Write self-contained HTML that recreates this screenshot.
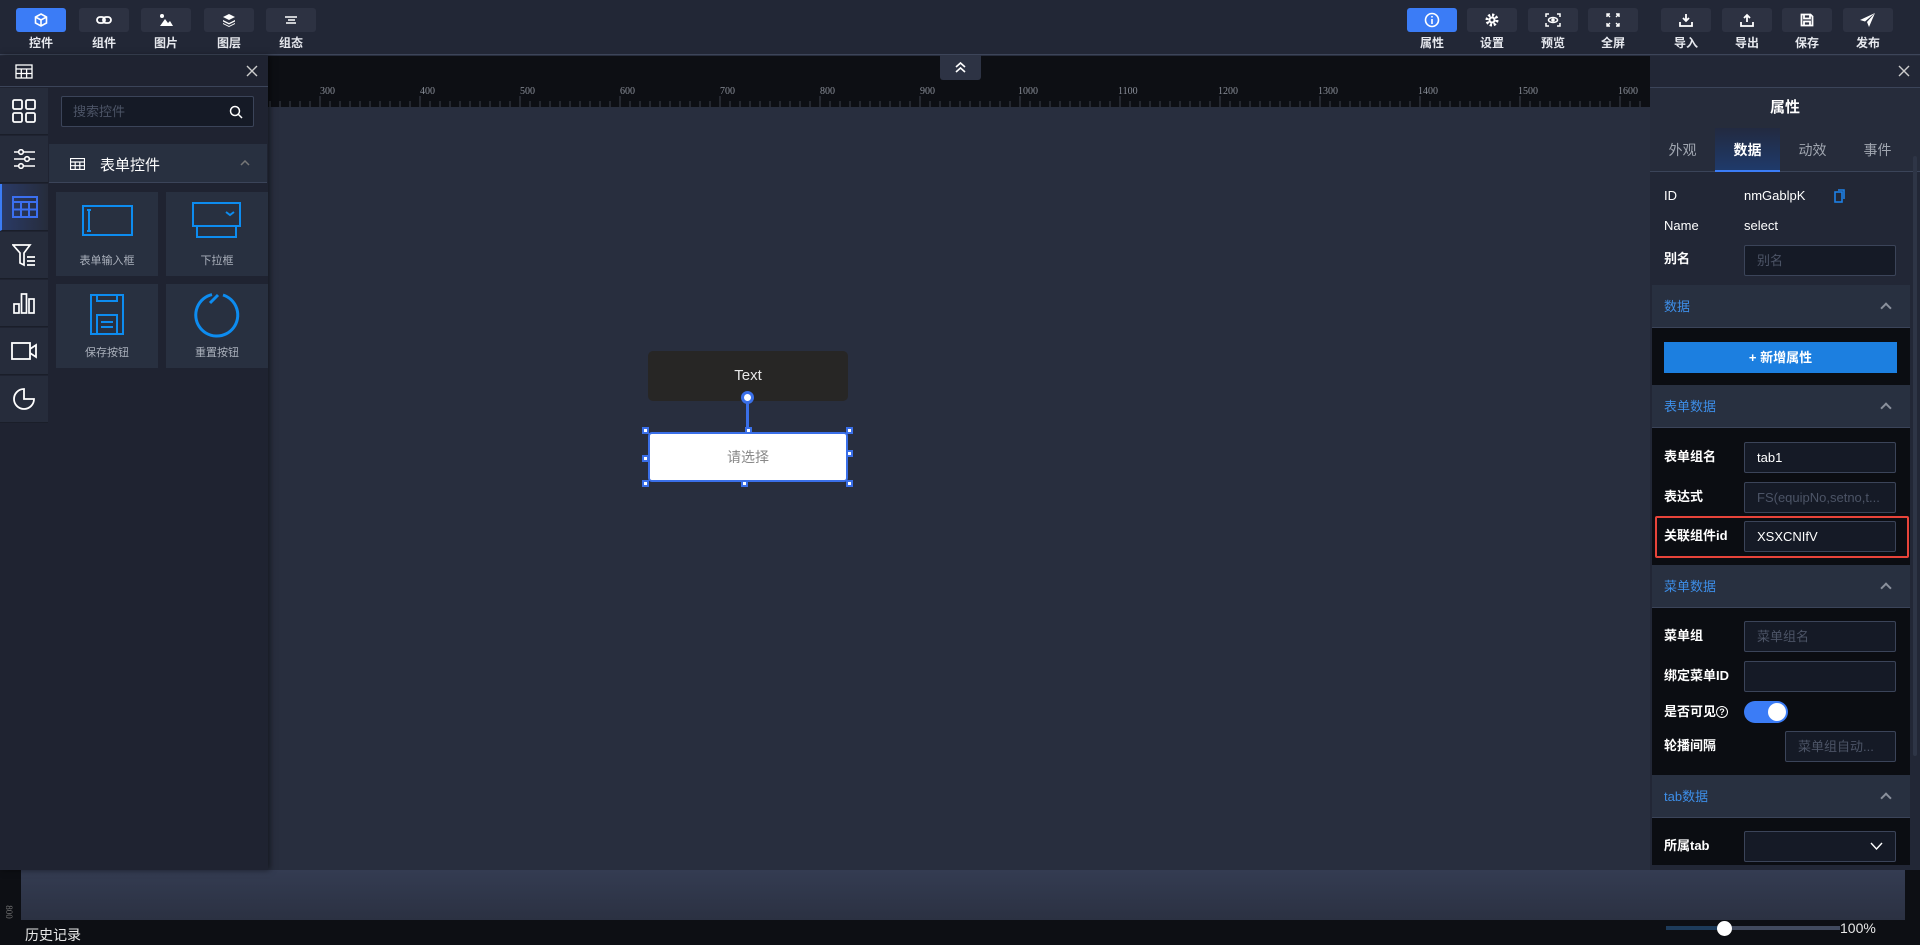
<!DOCTYPE html>
<html><head><meta charset="utf-8"><style>
*{box-sizing:border-box;margin:0;padding:0}
body{width:1920px;height:945px;overflow:hidden;background:#282e3e;font-family:"Liberation Sans","Noto Sans CJK SC",sans-serif;color:#fff;position:relative}
.abs{position:absolute}
#top{left:0;top:0;width:1920px;height:55px;background:#222736;border-bottom:1px solid #3d4559}
.tb{position:absolute;top:8px;width:50px;height:24px;background:#2d3242;border-radius:3px;display:flex;align-items:center;justify-content:center}
.tb.on{background:#3b7cf6}
.tl{position:absolute;top:34px;width:50px;text-align:center;font-size:12px;font-weight:bold;color:#e6e8ee}
#ruler{left:268px;top:56px;width:1382px;height:51px;background:#0d0f14}
.rn{position:absolute;top:30px;font-family:"Liberation Serif",serif;font-size:10px;color:#8a8f99}
#lp{left:0;top:56px;width:268px;height:814px;background:#1f2331;box-shadow:2px 0 6px rgba(0,0,0,.5)}
.ib{position:absolute;left:0;width:48px;height:47px;background:#262c3b;border-bottom:1px solid #1a1e29;display:flex;align-items:center;justify-content:center}
.card{position:absolute;width:102px;height:84px;background:#283040;text-align:center;font-size:11px;color:#aab0bb}
.card span{position:absolute;left:0;right:0;top:60px}
#rp{left:1650px;top:56px;width:270px;height:814px;background:#222736}
.lab{position:absolute;left:14px;font-size:13px;color:#fff}
.inp{position:absolute;left:94px;width:152px;height:31px;border:1px solid #3b4459;background:#151a26;border-radius:2px;font-size:13px;padding-left:12px;line-height:29px;color:#fff;white-space:nowrap;overflow:hidden}
.ph{color:#4c5466}
.sh{position:absolute;left:2px;width:258px;height:43px;background:#283040;border-bottom:1px solid #3b4459;color:#3d8ee8;font-size:13px;line-height:43px;padding-left:12px}
.sh:after{content:"";position:absolute;right:20px;top:19px;width:6px;height:6px;border-left:2px solid #8a909c;border-top:2px solid #8a909c;transform:rotate(45deg)}
.blk{position:absolute;left:2px;width:258px;background:#0b0d12}
.h{position:absolute;width:7px;height:7px;background:#fff;border:2px solid #3a6fe8}
</style></head><body>

<div id="top" class="abs">
 <div class="tb on" style="left:16px"><svg width="14" height="14" viewBox="0 0 14 14" fill="none" stroke="#fff" stroke-width="1.6"><path d="M7 1L12.5 4v6L7 13 1.5 10V4z M1.5 4L7 7l5.5-3 M7 7v6"/></svg></div><div class="tl" style="left:16px">控件</div>
 <div class="tb" style="left:79px"><svg width="16" height="10" viewBox="0 0 16 10" fill="none" stroke="#fff" stroke-width="1.8"><rect x="1" y="2" width="8" height="6" rx="3"/><rect x="7" y="2" width="8" height="6" rx="3"/></svg></div><div class="tl" style="left:79px">组件</div>
 <div class="tb" style="left:141px"><svg width="14" height="14" viewBox="0 0 14 14" fill="#fff"><circle cx="3" cy="3" r="2"/><path d="M1 13l5-7 3 4 2-2 3 5z"/></svg></div><div class="tl" style="left:141px">图片</div>
 <div class="tb" style="left:204px"><svg width="14" height="14" viewBox="0 0 14 14" fill="#fff"><path d="M7 1l6 3-6 3-6-3z"/><path d="M1 7l6 3 6-3v1.5l-6 3-6-3z"/><path d="M1 10l6 3 6-3v1l-6 3-6-3z"/></svg></div><div class="tl" style="left:204px">图层</div>
 <div class="tb" style="left:266px"><svg width="14" height="10" viewBox="0 0 14 10" stroke="#fff" stroke-width="1.6"><path d="M1 2h12M4 5h7M2 8h10"/></svg></div><div class="tl" style="left:266px">组态</div>

 <div class="tb on" style="left:1407px"><svg width="16" height="16" viewBox="0 0 16 16" fill="none" stroke="#fff" stroke-width="1.6"><circle cx="8" cy="8" r="6.5"/><path d="M8 7v5M8 4v1.5"/></svg></div><div class="tl" style="left:1407px">属性</div>
 <div class="tb" style="left:1467px"><svg width="14" height="14" viewBox="0 0 14 14"><circle cx="7" cy="7" r="5" fill="none" stroke="#fff" stroke-width="3" stroke-dasharray="2.2 1.7"/><circle cx="7" cy="7" r="3.5" fill="#fff"/><circle cx="7" cy="7" r="1.5" fill="#2d3242"/></svg></div><div class="tl" style="left:1467px">设置</div>
 <div class="tb" style="left:1528px"><svg width="16" height="14" viewBox="0 0 16 14" fill="none" stroke="#fff" stroke-width="1.5"><path d="M1 4V1h3M12 1h3v3M15 10v3h-3M4 13H1v-3"/><ellipse cx="8" cy="7" rx="4.5" ry="2.5"/><circle cx="8" cy="7" r="1" fill="#fff"/></svg></div><div class="tl" style="left:1528px">预览</div>
 <div class="tb" style="left:1588px"><svg width="14" height="14" viewBox="0 0 14 14" fill="none" stroke="#fff" stroke-width="1.4"><path d="M1 4V1h3M1 1l3 3M13 4V1h-3M13 1l-3 3M1 10v3h3M1 13l3-3M13 10v3h-3M13 13l-3-3"/></svg></div><div class="tl" style="left:1588px">全屏</div>
 <div class="tb" style="left:1661px"><svg width="14" height="14" viewBox="0 0 14 14" fill="none" stroke="#fff" stroke-width="1.8"><path d="M7 1v7M4 5l3 3 3-3M1 9v4h12V9"/></svg></div><div class="tl" style="left:1661px">导入</div>
 <div class="tb" style="left:1722px"><svg width="14" height="14" viewBox="0 0 14 14" fill="none" stroke="#fff" stroke-width="1.8"><path d="M7 9V2M4 5l3-3 3 3M1 9v4h12V9"/></svg></div><div class="tl" style="left:1722px">导出</div>
 <div class="tb" style="left:1782px"><svg width="14" height="14" viewBox="0 0 14 14" fill="none" stroke="#fff" stroke-width="1.8"><path d="M1.5 1.5h9l2 2v9h-11z M4 1.5v4h6v-4 M4 12.5v-4h6v4"/></svg></div><div class="tl" style="left:1782px">保存</div>
 <div class="tb" style="left:1843px"><svg width="16" height="14" viewBox="0 0 16 14" fill="#fff"><path d="M15 0L0 7l5 1.5zM15 0L7 9l2 5z"/></svg></div><div class="tl" style="left:1843px">发布</div>
</div>

<div id="ruler" class="abs">
 <svg class="abs" style="left:0;top:40px" width="1382" height="11">
 <path stroke="#3a3f4a" d="M2 5v6M12 5v6M22 5v6M32 5v6M42 5v6M52 0v11M62 5v6M72 5v6M82 5v6M92 5v6M102 5v6M112 5v6M122 5v6M132 5v6M142 5v6M152 0v11M162 5v6M172 5v6M182 5v6M192 5v6M202 5v6M212 5v6M222 5v6M232 5v6M242 5v6M252 0v11M262 5v6M272 5v6M282 5v6M292 5v6M302 5v6M312 5v6M322 5v6M332 5v6M342 5v6M352 0v11M362 5v6M372 5v6M382 5v6M392 5v6M402 5v6M412 5v6M422 5v6M432 5v6M442 5v6M452 0v11M462 5v6M472 5v6M482 5v6M492 5v6M502 5v6M512 5v6M522 5v6M532 5v6M542 5v6M552 0v11M562 5v6M572 5v6M582 5v6M592 5v6M602 5v6M612 5v6M622 5v6M632 5v6M642 5v6M652 0v11M662 5v6M672 5v6M682 5v6M692 5v6M702 5v6M712 5v6M722 5v6M732 5v6M742 5v6M752 0v11M762 5v6M772 5v6M782 5v6M792 5v6M802 5v6M812 5v6M822 5v6M832 5v6M842 5v6M852 0v11M862 5v6M872 5v6M882 5v6M892 5v6M902 5v6M912 5v6M922 5v6M932 5v6M942 5v6M952 0v11M962 5v6M972 5v6M982 5v6M992 5v6M1002 5v6M1012 5v6M1022 5v6M1032 5v6M1042 5v6M1052 0v11M1062 5v6M1072 5v6M1082 5v6M1092 5v6M1102 5v6M1112 5v6M1122 5v6M1132 5v6M1142 5v6M1152 0v11M1162 5v6M1172 5v6M1182 5v6M1192 5v6M1202 5v6M1212 5v6M1222 5v6M1232 5v6M1242 5v6M1252 0v11M1262 5v6M1272 5v6M1282 5v6M1292 5v6M1302 5v6M1312 5v6M1322 5v6M1332 5v6M1342 5v6M1352 0v11M1362 5v6M1372 5v6"/></svg>
 <div class="rn" style="left:52px">300</div><div class="rn" style="left:152px">400</div><div class="rn" style="left:252px">500</div><div class="rn" style="left:352px">600</div><div class="rn" style="left:452px">700</div><div class="rn" style="left:552px">800</div><div class="rn" style="left:652px">900</div><div class="rn" style="left:750px">1000</div><div class="rn" style="left:850px">1100</div><div class="rn" style="left:950px">1200</div><div class="rn" style="left:1050px">1300</div><div class="rn" style="left:1150px">1400</div><div class="rn" style="left:1250px">1500</div><div class="rn" style="left:1350px">1600</div>
</div>
<div class="abs" style="left:940px;top:55px;width:41px;height:25px;background:#2d3344;border-radius:0 0 3px 3px"><svg class="abs" style="left:14px;top:6px" width="13" height="12" fill="none" stroke="#fff" stroke-width="1.6"><path d="M2 6l4.5-4 4.5 4M2 11l4.5-4 4.5 4"/></svg></div>

<div class="abs" style="left:648px;top:351px;width:200px;height:50px;background:#272625;border-radius:5px;text-align:center;line-height:50px;font-size:15px;color:#e8e8e8">Text</div>
<div class="abs" style="left:746px;top:398px;width:3px;height:34px;background:#3a6fe8"></div>
<div class="abs" style="left:741px;top:391px;width:13px;height:13px;border-radius:50%;background:#fff;border:3px solid #3a6fe8"></div>
<div class="abs" style="left:648px;top:432px;width:200px;height:50px;background:#fff;border:2px solid #3a6fe8;border-radius:4px;text-align:center;line-height:46px;font-size:14px;color:#888">请选择</div>
<div class="h" style="left:642px;top:427px"></div><div class="h" style="left:745px;top:427px"></div><div class="h" style="left:846px;top:427px"></div>
<div class="h" style="left:642px;top:455px"></div><div class="h" style="left:846px;top:450px"></div>
<div class="h" style="left:642px;top:480px"></div><div class="h" style="left:741px;top:480px"></div><div class="h" style="left:846px;top:480px"></div>

<div class="abs" style="left:21px;top:870px;width:1884px;height:50px;background:linear-gradient(#343c52,#2b3142)"></div>
<div class="abs" style="left:0;top:920px;width:1920px;height:25px;background:#0d0f14"></div>
<div class="abs" style="left:0;top:870px;width:21px;height:50px;background:#0d0f14"></div>
<div class="abs" style="left:1905px;top:870px;width:15px;height:50px;background:#0d0f14"></div>
<div class="abs" style="left:2px;top:907px;font-size:9px;color:#777;transform:rotate(90deg);font-family:'Liberation Serif',serif">800</div>
<div class="abs" style="left:25px;top:925px;font-size:14px;color:#e8e8e8">历史记录</div>
<div class="abs" style="left:1666px;top:926px;width:174px;height:4px;background:#414a5e"></div>
<div class="abs" style="left:1666px;top:926px;width:58px;height:4px;background:#1d3b5a"></div>
<div class="abs" style="left:1717px;top:921px;width:15px;height:15px;border-radius:50%;background:#fff"></div>
<div class="abs" style="left:1840px;top:920px;font-size:14px;color:#e8e8e8">100%</div>

<div id="lp" class="abs">
 <div class="abs" style="left:0;top:0;width:268px;height:31px;border-bottom:1px solid #3b4459"></div>
 <svg class="abs" style="left:15px;top:8px" width="18" height="15" fill="none" stroke="#fff" stroke-width="1.3"><rect x="1" y="1" width="16" height="13"/><path d="M1 5h16M1 9.5h16M6.3 5v9M11.6 5v9"/></svg>
 <svg class="abs" style="left:246px;top:9px" width="12" height="12" stroke="#ccc" stroke-width="1.4"><path d="M1 1l10 10M11 1L1 11"/></svg>
 <div class="ib" style="top:32px"><svg width="24" height="24" fill="none" stroke="#fff" stroke-width="1.8"><rect x="1" y="1" width="9" height="9" rx="1.5"/><rect x="14" y="1" width="9" height="9" rx="1.5"/><rect x="1" y="14" width="9" height="9" rx="1.5"/><rect x="14" y="14" width="9" height="9" rx="1.5"/></svg></div>
 <div class="ib" style="top:80px"><svg width="22" height="20" fill="none" stroke="#fff" stroke-width="1.6"><path d="M1 3h21M1 10h21M1 17h21"/><circle cx="8" cy="3" r="2.3" fill="#262c3b"/><circle cx="14" cy="10" r="2.3" fill="#262c3b"/><circle cx="8" cy="17" r="2.3" fill="#262c3b"/></svg></div>
 <div class="ib" style="top:128px;background:linear-gradient(90deg,#2a3a66,#262c3b);border-left:2px solid #3b7cf6"><svg width="26" height="22" fill="none" stroke="#3b6ff0" stroke-width="2"><rect x="1" y="1" width="24" height="20"/><path d="M1 6h24M1 13.5h24M9 6v15M17 6v15"/></svg></div>
 <div class="ib" style="top:176px"><svg width="24" height="24" fill="none" stroke="#fff" stroke-width="1.7"><path d="M1 2h17l-6 8v12l-4-2V10z M15 14h8M15 18h8M15 22h8"/></svg></div>
 <div class="ib" style="top:224px"><svg width="22" height="22" fill="none" stroke="#fff" stroke-width="1.7"><rect x="1" y="12" width="5" height="9"/><rect x="8.5" y="2" width="5" height="19"/><rect x="16" y="7" width="5" height="14"/></svg></div>
 <div class="ib" style="top:272px"><svg width="26" height="18" fill="none" stroke="#fff" stroke-width="1.8"><rect x="1" y="1" width="18" height="16"/><path d="M19 7l6-4v12l-6-4"/></svg></div>
 <div class="ib" style="top:320px"><svg width="24" height="24" fill="none" stroke="#fff" stroke-width="1.8"><path d="M12 2A10 10 0 1 0 22 12H12z M12 2v10"/></svg></div>
 <div class="abs" style="left:61px;top:40px;width:193px;height:31px;border:1px solid #3b4459;background:#151a26;border-radius:2px;font-size:13px;color:#4c5466;line-height:29px;padding-left:11px">搜索控件
  <svg class="abs" style="right:10px;top:8px" width="14" height="14" fill="none" stroke="#fff" stroke-width="1.5"><circle cx="6" cy="6" r="4.5"/><path d="M9.5 9.5l3.5 3.5"/></svg></div>
 <div class="abs" style="left:49px;top:88px;width:218px;height:39px;background:#283040;border-bottom:1px solid #3b4459"></div>
 <svg class="abs" style="left:70px;top:102px" width="15" height="12" fill="none" stroke="#fff" stroke-width="1.2"><rect x="0.5" y="0.5" width="14" height="11"/><path d="M0.5 4h14M0.5 7.7h14M5.2 4v7.5M9.8 4v7.5"/></svg>
 <div class="abs" style="left:100px;top:98px;font-size:15px;color:#fff">表单控件</div>
 <svg class="abs" style="left:240px;top:104px" width="10" height="6" fill="none" stroke="#777" stroke-width="1.5"><path d="M1 5l4-4 4 4"/></svg>
 <div class="card" style="left:56px;top:136px"><svg class="abs" style="left:25px;top:12px" width="53" height="33" fill="none" stroke="#0d8cf0" stroke-width="2"><rect x="2" y="2" width="49" height="29"/><path d="M8 6v21M6 6h4M6 27h4"/></svg><span>表单输入框</span></div>
 <div class="card" style="left:166px;top:136px"><svg class="abs" style="left:26px;top:10px" width="50" height="36" fill="none" stroke="#0d8cf0" stroke-width="2"><rect x="1" y="1" width="47" height="23"/><path d="M5 24v11h39V24M34 10l4 3 4-3"/></svg><span>下拉框</span></div>
 <div class="card" style="left:56px;top:228px"><svg class="abs" style="left:34px;top:10px" width="34" height="42" fill="none" stroke="#0d8cf0" stroke-width="2"><rect x="1" y="1" width="32" height="39"/><path d="M7 1v6h20V1M7 40V21h20v19M11 28h12M11 33h12"/></svg><span>保存按钮</span></div>
 <div class="card" style="left:166px;top:228px"><svg class="abs" style="left:27px;top:7px" width="48" height="48" fill="none" stroke="#0d8cf0" stroke-width="3"><path d="M30 4A21 21 0 1 1 19 3.6"/><path d="M17 12l8-8"/></svg><span>重置按钮</span></div>
</div>

<div id="rp" class="abs">
 <svg class="abs" style="left:248px;top:9px" width="12" height="12" stroke="#ccc" stroke-width="1.4"><path d="M1 1l10 10M11 1L1 11"/></svg>
 <div class="abs" style="left:0;top:31px;width:270px;height:1px;background:#3b4459"></div>
 <div class="abs" style="left:0;top:32px;width:270px;height:40px;text-align:center;line-height:40px;font-size:15px;font-weight:bold;background:#262c3b">属性</div>
 <div class="abs" style="left:0;top:72px;width:270px;height:44px;background:#262c3b;border-bottom:1px solid #3b4459;font-size:14px;color:#a0a6b0">
  <div class="abs" style="left:0;width:65px;text-align:center;line-height:44px">外观</div>
  <div class="abs" style="left:65px;width:65px;height:44px;text-align:center;line-height:44px;color:#fff;font-weight:bold;background:linear-gradient(#222a40,#1f3a6a);border-bottom:2px solid #3b7cf6">数据</div>
  <div class="abs" style="left:130px;width:65px;text-align:center;line-height:44px">动效</div>
  <div class="abs" style="left:195px;width:65px;text-align:center;line-height:44px">事件</div>
 </div>
 <div class="abs" style="left:2px;top:117px;width:258px;height:112px;background:#222736"></div>
 <div class="lab" style="top:132px">ID</div><div class="abs" style="left:94px;top:132px;font-size:13px">nmGablpK</div>
 <svg class="abs" style="left:184px;top:133px" width="11" height="14" fill="none" stroke="#1e80e6" stroke-width="1.6"><rect x="1" y="3" width="7" height="10"/><path d="M4 1h6v9"/></svg>
 <div class="lab" style="top:162px">Name</div><div class="abs" style="left:94px;top:162px;font-size:13px">select</div>
 <div class="lab" style="top:192px;font-weight:bold">别名</div><div class="inp" style="top:189px"><span class="ph">别名</span></div>
 <div class="sh" style="top:229px">数据</div>
 <div class="blk" style="top:272px;height:57px"></div>
 <div class="abs" style="left:14px;top:286px;width:233px;height:31px;background:#1c7fe0;text-align:center;line-height:31px;font-size:13px;font-weight:bold">+ 新增属性</div>
 <div class="sh" style="top:329px">表单数据</div>
 <div class="blk" style="top:372px;height:137px"></div>
 <div class="lab" style="top:390px;font-weight:bold">表单组名</div><div class="inp" style="top:386px">tab1</div>
 <div class="lab" style="top:430px;font-weight:bold">表达式</div><div class="inp" style="top:426px"><span class="ph">FS(equipNo,setno,t...</span></div>
 <div class="abs" style="left:5px;top:460px;width:254px;height:42px;border:2px solid #e8443a;border-radius:2px"></div>
 <div class="lab" style="top:469px;font-weight:bold">关联组件id</div><div class="inp" style="top:465px">XSXCNIfV</div>
 <div class="sh" style="top:509px">菜单数据</div>
 <div class="blk" style="top:552px;height:167px"></div>
 <div class="lab" style="top:569px;font-weight:bold">菜单组</div><div class="inp" style="top:565px"><span class="ph">菜单组名</span></div>
 <div class="lab" style="top:609px;font-weight:bold">绑定菜单ID</div><div class="inp" style="top:605px"></div>
 <div class="lab" style="top:645px;font-weight:bold">是否可见<span style="display:inline-block;width:12px;height:12px;border:1.3px solid #fff;border-radius:50%;font-size:9px;text-align:center;line-height:10px;vertical-align:1px">?</span></div>
 <div class="abs" style="left:94px;top:645px;width:44px;height:22px;border-radius:11px;background:#3b7cf6"><div class="abs" style="left:24px;top:2px;width:18px;height:18px;border-radius:50%;background:#fff"></div></div>
 <div class="lab" style="top:679px;font-weight:bold">轮播间隔</div><div class="inp" style="top:675px;left:135px;width:111px"><span class="ph">菜单组自动...</span></div>
 <div class="sh" style="top:719px">tab数据</div>
 <div class="blk" style="top:762px;height:47px"></div>
 <div class="lab" style="top:779px;font-weight:bold">所属tab</div><div class="inp" style="top:775px"><svg class="abs" style="right:12px;top:10px" width="13" height="8" fill="none" stroke="#fff" stroke-width="1.4"><path d="M1 1l5.5 6L12 1"/></svg></div>
 <div class="abs" style="left:263px;top:100px;width:4px;height:600px;background:#2e3546;border-radius:2px"></div>
</div>
</body></html>
